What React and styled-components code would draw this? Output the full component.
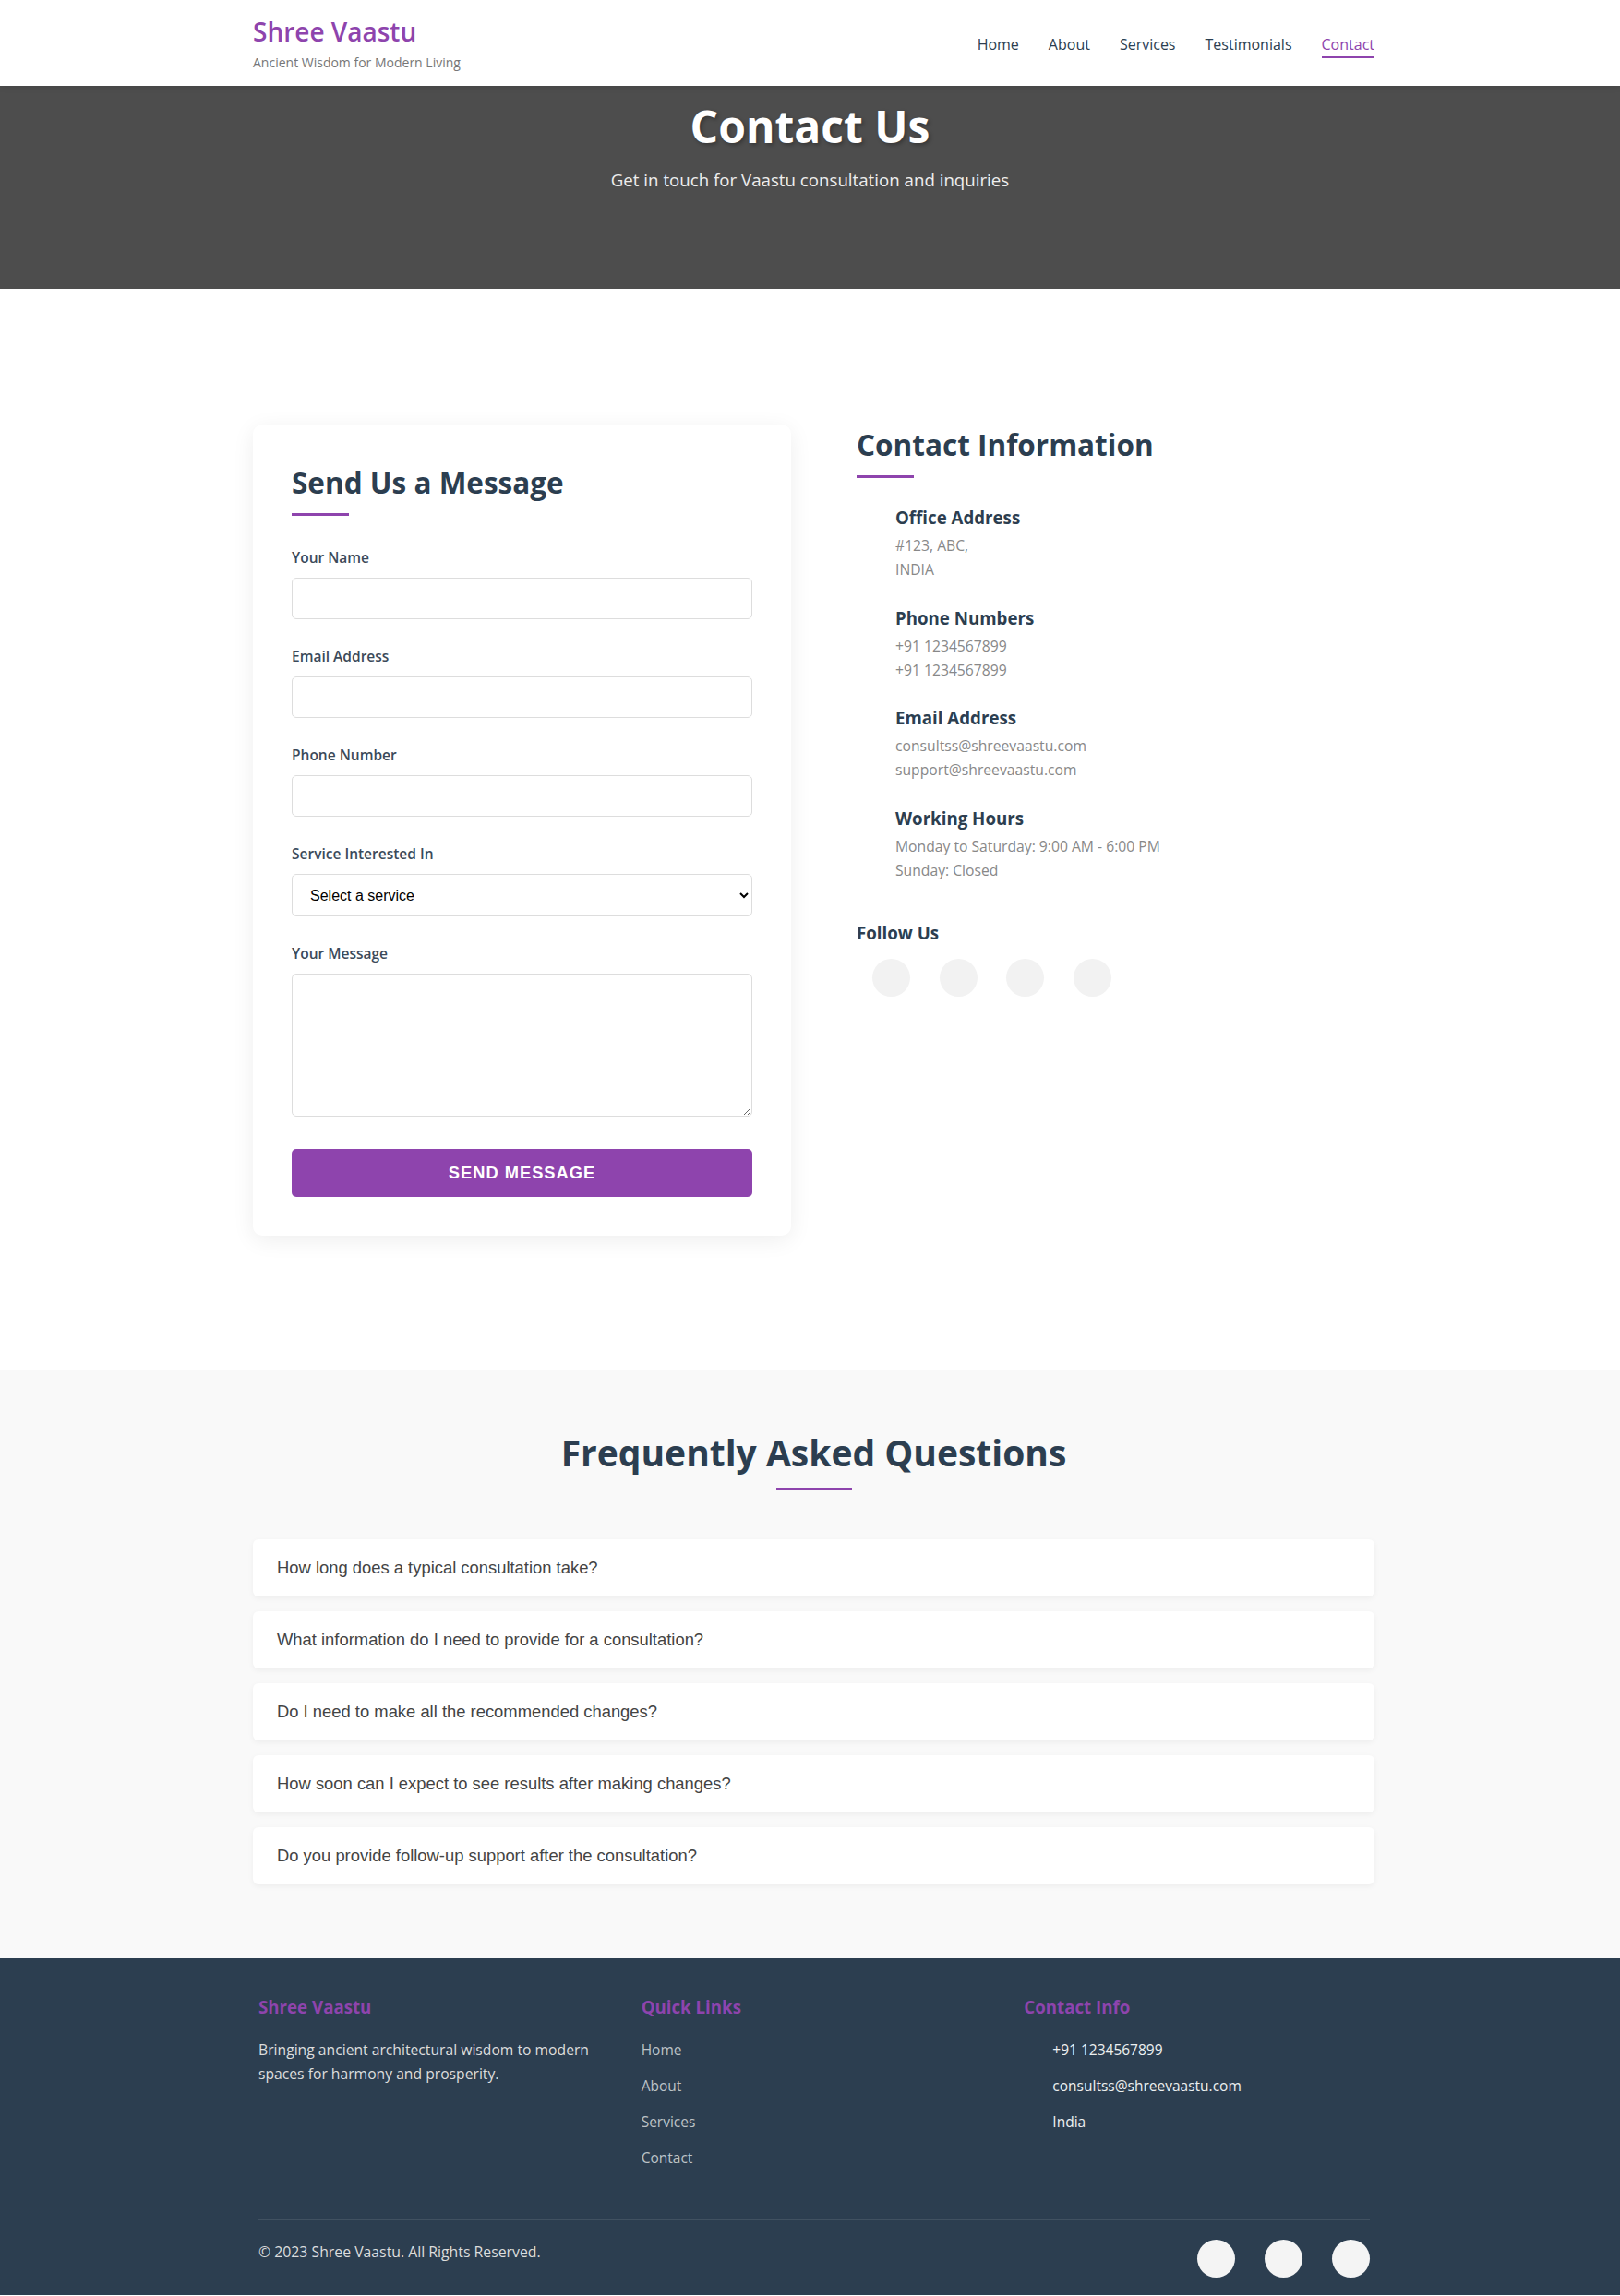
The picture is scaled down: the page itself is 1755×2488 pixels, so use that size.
import React from 'react'
import styled, { createGlobalStyle } from 'styled-components'

const GlobalStyle = createGlobalStyle`
  * {
    box-sizing: border-box;
  }
  body {
    margin: 0;
    font-family: 'Open Sans', 'Noto Sans', sans-serif;
    color: #333;
    background: #fff;
  }
  h1, h2, h3, p, ul {
    margin: 0;
    padding: 0;
  }
`

const Container = styled.div`
  width: 1223px;
  margin: 0 auto;
  padding-left: 8px;
`

/* header */

const Header = styled.header`
  background: #fff;
  box-shadow: 0 2px 6px rgba(0, 0, 0, 0.1);
  position: relative;
  z-index: 5;
`

const HeaderInner = styled(Container)`
  height: 93px;
  display: flex;
  justify-content: space-between;
  align-items: center;
`

const Logo = styled.div`
  padding-top: 3px;
`

const LogoTitle = styled.h1`
  font-size: 28px;
  font-weight: 600;
  line-height: 1.2;
  color: #8e44ad;
`

const Tagline = styled.p`
  font-size: 14px;
  line-height: 20px;
  margin-top: 7px;
  color: #777;
`

const Nav = styled.nav`
  display: flex;
  gap: 32px;
  margin-top: 5px;
`

const NavLink = styled.a`
  font-size: 16px;
  line-height: 24px;
  font-weight: 500;
  text-decoration: none;
  padding-bottom: 1px;
  color: ${p => (p.$active ? '#8e44ad' : '#2c3e50')};
  border-bottom: 2px solid ${p => (p.$active ? '#8e44ad' : 'transparent')};
`

/* hero */

const Hero = styled.section`
  background: #4d4d4d;
  height: 220px;
  padding-top: 15px;
  text-align: center;
  color: #fff;
`

const HeroTitle = styled.h1`
  font-size: 48px;
  font-weight: 700;
  line-height: 1.2;
  text-shadow: 2px 2px 4px rgba(0, 0, 0, 0.3);
`

const HeroText = styled.p`
  font-size: 18.7px;
  line-height: 30px;
  margin-top: 14px;
  color: #eee;
`

/* contact section */

const ContactSection = styled.section`
  padding: 147px 0 146px;
`

const ContactGrid = styled(Container)`
  display: grid;
  grid-template-columns: 583px 1fr;
  column-gap: 71px;
  align-items: start;
`

const FormCard = styled.div`
  background: #fff;
  border-radius: 10px;
  box-shadow: 0 5px 25px rgba(0, 0, 0, 0.07);
  padding: 45px 42px 42px;
`

const SectionTitle = styled.h2`
  font-size: 31.5px;
  font-weight: 700;
  line-height: 36px;
  color: #2c3e50;

  &::after {
    content: '';
    display: block;
    width: 62px;
    height: 3px;
    margin-top: 15px;
    background: #8e44ad;
  }
`

const Form = styled.form`
  margin-top: 33px;
`

const FormGroup = styled.div`
  margin-bottom: 28px;
`

const Label = styled.label`
  display: block;
  font-size: 15.5px;
  font-weight: 600;
  line-height: 24px;
  margin-bottom: 10px;
  color: #3b4a5a;
`

const fieldStyles = `
  display: block;
  width: 100%;
  border: 1px solid #ddd;
  border-radius: 5px;
  background: #fff;
  font-size: 16px;
`

const Input = styled.input`
  ${fieldStyles}
  height: 45px;
  padding: 0 15px;
  font-family: inherit;
`

const Select = styled.select`
  ${fieldStyles}
  height: 46px;
  padding: 0 15px;
  color: #000;
  font-family: 'Liberation Sans', Arial, sans-serif;
`

const TextArea = styled.textarea`
  ${fieldStyles}
  height: 155px;
  padding: 12px 15px;
  resize: vertical;
  font-family: inherit;
`

const SubmitButton = styled.button`
  display: block;
  width: 100%;
  height: 52px;
  margin-top: 35px;
  border: none;
  border-radius: 5px;
  background: #8e44ad;
  color: #fff;
  font-family: 'Liberation Sans', Arial, sans-serif;
  font-size: 18.3px;
  font-weight: 700;
  letter-spacing: 1px;
  text-transform: uppercase;
  cursor: pointer;
`

const InfoColumn = styled.div`
  padding-top: 4px;
`

const InfoList = styled.div`
  margin-top: 31px;
`

const InfoItem = styled.div`
  padding-left: 42px;
  margin-bottom: 27.5px;
`

const InfoHeading = styled.h3`
  font-size: 18.7px;
  font-weight: 700;
  line-height: 24px;
  color: #2c3e50;
`

const InfoText = styled.p`
  margin-top: 5px;
  font-size: 15.7px;
  line-height: 26px;
  color: #888;
`

const FollowTitle = styled(InfoHeading)`
  margin-top: 43px;
`

const SocialRow = styled.div`
  display: flex;
  gap: ${p => p.$gap}px;
  margin-top: ${p => p.$top || 0}px;
  padding-left: ${p => p.$indent || 0}px;
`

const SocialDot = styled.a`
  display: block;
  width: 41px;
  height: 41px;
  border-radius: 50%;
  background: ${p => (p.$light ? '#f4f4f4' : '#f2f2f2')};
`

/* faq */

const FaqSection = styled.section`
  background: #f9f9f9;
  padding: 66px 0 80px;
`

const FaqTitle = styled.h2`
  font-size: 39px;
  font-weight: 700;
  line-height: 1.2;
  text-align: center;
  color: #2c3e50;

  &::after {
    content: '';
    display: block;
    width: 82px;
    height: 3px;
    margin: 14px auto 0;
    background: #8e44ad;
  }
`

const FaqList = styled.div`
  display: flex;
  flex-direction: column;
  gap: 16px;
  margin-top: 53px;
`

const FaqQuestion = styled.button`
  width: 100%;
  height: 62px;
  padding: 0 26px;
  text-align: left;
  border: none;
  border-radius: 6px;
  background: #fff;
  box-shadow: 0 2px 6px rgba(0, 0, 0, 0.05);
  font-family: 'Liberation Sans', Arial, sans-serif;
  font-size: 18.4px;
  color: #444;
  cursor: pointer;
`

/* footer */

const Footer = styled.footer`
  background: #2c3e50;
  color: #fff;
  padding: 41px 0 19px;
`

const FooterContent = styled.div`
  padding: 0 5px 0 6px;
`

const FooterGrid = styled.div`
  display: grid;
  grid-template-columns: repeat(3, 1fr);
  gap: 40px;
`

const FooterHeading = styled.h3`
  font-size: 18.7px;
  font-weight: 700;
  line-height: 24px;
  color: #8e44ad;
`

const FooterText = styled.p`
  margin-top: 21px;
  font-size: 15.7px;
  line-height: 26px;
  color: #ddd;
`

const FooterList = styled.ul`
  list-style: none;
  margin-top: 22px;
  padding-left: ${p => p.$indent || 0}px;
`

const FooterItem = styled.li`
  font-size: 15.5px;
  line-height: 24px;
  margin-bottom: 15px;
  color: ${p => (p.$bright ? '#ecf0f1' : '#bdc3c7')};

  a {
    color: inherit;
    text-decoration: none;
  }
`

const FooterBottom = styled.div`
  display: flex;
  justify-content: space-between;
  align-items: flex-start;
  margin-top: 40px;
  padding-top: 21px;
  border-top: 1px solid rgba(255, 255, 255, 0.1);
`

const Copyright = styled.p`
  font-size: 15.8px;
  line-height: 26px;
  color: #ddd;
`

const navItems = ['Home', 'About', 'Services', 'Testimonials', 'Contact']

const infoItems = [
  { title: 'Office Address', lines: ['#123, ABC,', 'INDIA'] },
  { title: 'Phone Numbers', lines: ['+91 1234567899', '+91 1234567899'] },
  { title: 'Email Address', lines: ['consultss@shreevaastu.com', 'support@shreevaastu.com'] },
  { title: 'Working Hours', lines: ['Monday to Saturday: 9:00 AM - 6:00 PM', 'Sunday: Closed'] },
]

const faqs = [
  'How long does a typical consultation take?',
  'What information do I need to provide for a consultation?',
  'Do I need to make all the recommended changes?',
  'How soon can I expect to see results after making changes?',
  'Do you provide follow-up support after the consultation?',
]

export default function App() {
  return (
    <>
      <GlobalStyle />
      <Header>
        <HeaderInner>
          <Logo>
            <LogoTitle>Shree Vaastu</LogoTitle>
            <Tagline>Ancient Wisdom for Modern Living</Tagline>
          </Logo>
          <Nav>
            {navItems.map(item => (
              <NavLink key={item} href="#" $active={item === 'Contact'}>
                {item}
              </NavLink>
            ))}
          </Nav>
        </HeaderInner>
      </Header>

      <Hero>
        <HeroTitle>Contact Us</HeroTitle>
        <HeroText>Get in touch for Vaastu consultation and inquiries</HeroText>
      </Hero>

      <ContactSection>
        <ContactGrid>
          <FormCard>
            <SectionTitle>Send Us a Message</SectionTitle>
            <Form onSubmit={e => e.preventDefault()}>
              <FormGroup>
                <Label htmlFor="name">Your Name</Label>
                <Input id="name" type="text" />
              </FormGroup>
              <FormGroup>
                <Label htmlFor="email">Email Address</Label>
                <Input id="email" type="email" />
              </FormGroup>
              <FormGroup>
                <Label htmlFor="phone">Phone Number</Label>
                <Input id="phone" type="tel" />
              </FormGroup>
              <FormGroup>
                <Label htmlFor="service">Service Interested In</Label>
                <Select id="service" defaultValue="">
                  <option value="">Select a service</option>
                  <option value="residential">Residential Vaastu</option>
                  <option value="commercial">Commercial Vaastu</option>
                  <option value="industrial">Industrial Vaastu</option>
                </Select>
              </FormGroup>
              <div>
                <Label htmlFor="message">Your Message</Label>
                <TextArea id="message" />
              </div>
              <SubmitButton type="submit">Send Message</SubmitButton>
            </Form>
          </FormCard>

          <InfoColumn>
            <SectionTitle>Contact Information</SectionTitle>
            <InfoList>
              {infoItems.map(item => (
                <InfoItem key={item.title}>
                  <InfoHeading>{item.title}</InfoHeading>
                  <InfoText>
                    {item.lines[0]}
                    <br />
                    {item.lines[1]}
                  </InfoText>
                </InfoItem>
              ))}
            </InfoList>
            <FollowTitle>Follow Us</FollowTitle>
            <SocialRow $gap={31.5} $top={16} $indent={17}>
              <SocialDot href="#" aria-label="Facebook" />
              <SocialDot href="#" aria-label="Instagram" />
              <SocialDot href="#" aria-label="Twitter" />
              <SocialDot href="#" aria-label="YouTube" />
            </SocialRow>
          </InfoColumn>
        </ContactGrid>
      </ContactSection>

      <FaqSection>
        <Container>
          <FaqTitle>Frequently Asked Questions</FaqTitle>
          <FaqList>
            {faqs.map(q => (
              <FaqQuestion key={q} type="button">{q}</FaqQuestion>
            ))}
          </FaqList>
        </Container>
      </FaqSection>

      <Footer>
        <Container>
          <FooterContent>
            <FooterGrid>
              <div>
                <FooterHeading>Shree Vaastu</FooterHeading>
                <FooterText>
                  Bringing ancient architectural wisdom to modern spaces for harmony and prosperity.
                </FooterText>
              </div>
              <div>
                <FooterHeading>Quick Links</FooterHeading>
                <FooterList>
                  {['Home', 'About', 'Services', 'Contact'].map(link => (
                    <FooterItem key={link}>
                      <a href="#">{link}</a>
                    </FooterItem>
                  ))}
                </FooterList>
              </div>
              <div>
                <FooterHeading>Contact Info</FooterHeading>
                <FooterList $indent={31}>
                  <FooterItem $bright>+91 1234567899</FooterItem>
                  <FooterItem $bright>consultss@shreevaastu.com</FooterItem>
                  <FooterItem $bright>India</FooterItem>
                </FooterList>
              </div>
            </FooterGrid>
            <FooterBottom>
              <Copyright>&copy; 2023 Shree Vaastu. All Rights Reserved.</Copyright>
              <SocialRow $gap={32}>
                <SocialDot $light href="#" aria-label="Facebook" />
                <SocialDot $light href="#" aria-label="Instagram" />
                <SocialDot $light href="#" aria-label="Twitter" />
              </SocialRow>
            </FooterBottom>
          </FooterContent>
        </Container>
      </Footer>
    </>
  )
}
